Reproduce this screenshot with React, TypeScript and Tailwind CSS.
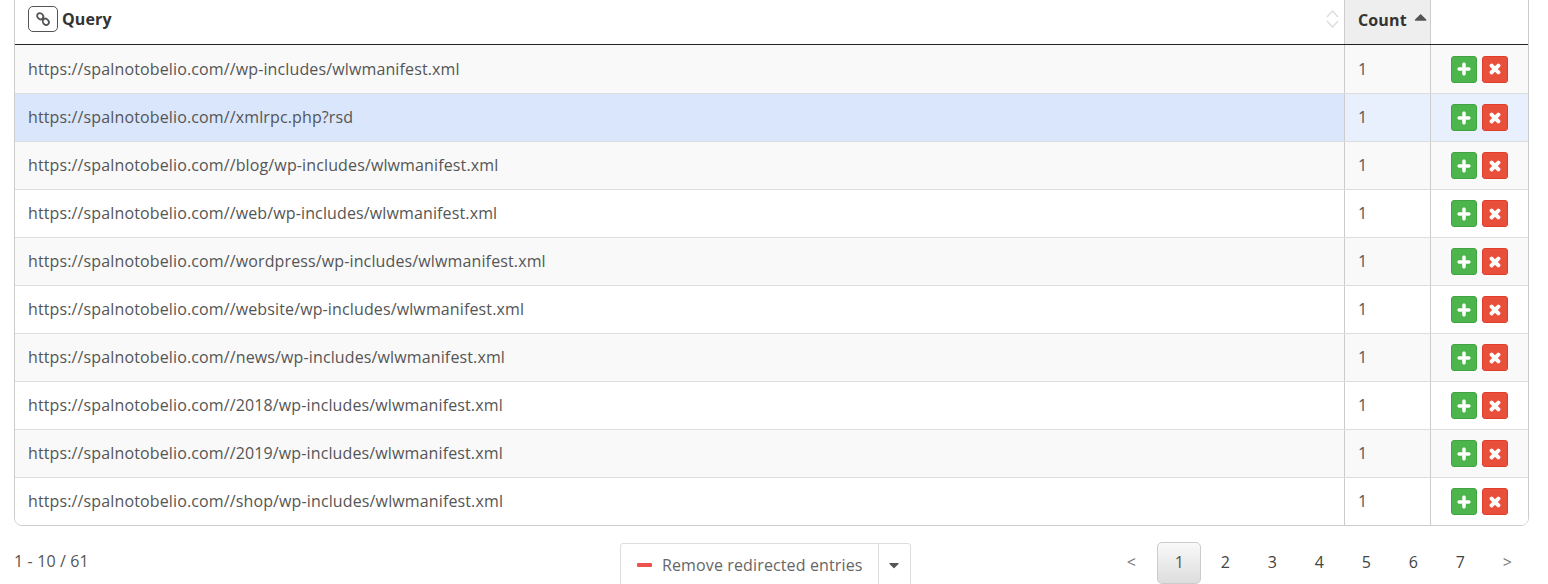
import { FaPlus, FaTimes, FaCaretDown, FaCaretUp } from 'react-icons/fa';

const queries = [
  'https://spalnotobelio.com//wp-includes/wlwmanifest.xml',
  'https://spalnotobelio.com//xmlrpc.php?rsd',
  'https://spalnotobelio.com//blog/wp-includes/wlwmanifest.xml',
  'https://spalnotobelio.com//web/wp-includes/wlwmanifest.xml',
  'https://spalnotobelio.com//wordpress/wp-includes/wlwmanifest.xml',
  'https://spalnotobelio.com//website/wp-includes/wlwmanifest.xml',
  'https://spalnotobelio.com//news/wp-includes/wlwmanifest.xml',
  'https://spalnotobelio.com//2018/wp-includes/wlwmanifest.xml',
  'https://spalnotobelio.com//2019/wp-includes/wlwmanifest.xml',
  'https://spalnotobelio.com//shop/wp-includes/wlwmanifest.xml',
];

function rowBg(i: number) {
  if (i === 1) return 'bg-[#d9e6fc]';
  return i % 2 === 0 ? 'bg-[#f9f9f9]' : 'bg-white';
}

function countBg(i: number) {
  if (i === 1) return 'bg-[#e9f0fd]';
  return i % 2 === 0 ? 'bg-[#f9f9f9]' : 'bg-white';
}

function ChainIcon() {
  return (
    <svg width="16" height="16" viewBox="0 0 16 16" fill="none" stroke="#555" strokeWidth="1.8">
      <ellipse cx="5.2" cy="5.2" rx="3.3" ry="2.8" transform="rotate(45 5.2 5.2)" />
      <ellipse cx="10.8" cy="10.8" rx="3.3" ry="2.8" transform="rotate(45 10.8 10.8)" />
      <path d="M7 7l2 2" />
    </svg>
  );
}

export default function App() {
  return (
    <div className="w-[1548px] h-[584px] overflow-hidden bg-white font-['Open_Sans',sans-serif] text-[16px] tracking-[0.13px] text-[#555]">
      <div className="ml-[14px] w-[1515px] h-[527px] -mt-px border border-[#ccc] rounded-b-[8px] overflow-hidden">
        {/* header */}
        <div className="flex h-[45px] border-b border-[#222] bg-white">
          <div className="flex-1 flex items-center pl-[13px] pr-[5px] pb-[6px]">
            <span className="w-[30px] h-[26px] border border-[#555] rounded-[5px] flex items-center justify-center">
              <ChainIcon />
            </span>
            <span className="ml-[4px] font-bold text-[#333]">Query</span>
            <span className="ml-auto flex flex-col gap-[2px]">
              <svg width="13" height="8" viewBox="0 0 13 8" fill="none" stroke="#ddd" strokeWidth="1.4"><path d="M1 7l5.5-6 5.5 6" /></svg>
              <svg width="13" height="8" viewBox="0 0 13 8" fill="none" stroke="#ddd" strokeWidth="1.4"><path d="M1 1l5.5 6 5.5-6" /></svg>
            </span>
          </div>
          <div className="w-[86px] border-l border-[#ccc] bg-[#eee] flex items-center pl-[13px] pb-[5px] font-bold text-[#333]">
            Count
            <FaCaretUp className="ml-[4px] mb-[5px] text-[#555] text-[20px]" />
          </div>
          <div className="w-[98px] border-l border-[#ccc]" />
        </div>

        {/* rows */}
        {queries.map((q, i) => (
          <div key={q} className={`flex h-[48px] ${i > 0 ? 'border-t border-[#ddd]' : ''} ${rowBg(i)}`}>
            <div className={`flex-1 flex items-center pl-[13px] whitespace-nowrap ${i > 0 ? 'pb-px' : ''}`}>{q}</div>
            <div className={`w-[86px] border-l border-[#ccc] flex items-center pl-[13px] ${i > 0 ? 'pb-px' : ''} ${countBg(i)}`}>1</div>
            <div className={`w-[98px] border-l border-[#ccc] flex items-center pl-[20px] gap-[5px] ${countBg(i)}`}>
              <button className="w-[26px] h-[27px] rounded-[3px] bg-[#4cb64c] border border-[#43a243] flex items-center justify-center text-white text-[14px]">
                <FaPlus stroke="currentColor" strokeWidth={30} />
              </button>
              <button className="w-[26px] h-[27px] rounded-[3px] bg-[#e8503c] border border-[#e03e2a] flex items-center justify-center text-white text-[14px]">
                <FaTimes stroke="currentColor" strokeWidth={50} />
              </button>
            </div>
          </div>
        ))}
      </div>

      {/* footer */}
      <div className="relative flex items-start mt-[17px] pl-[14px] pr-[17px] h-[60px]">
        <div className="w-[400px] pt-[6px] text-[#555]">1 - 10 / 61</div>
        <div className="ml-[206px] flex h-[44px] border border-[#ddd] rounded-[3px]">
          <div className="flex items-center pl-[16px] w-[257px] text-[#666]">
            <span className="w-[15px] h-[4px] bg-[#ef5350] rounded-[1px]" />
            <span className="ml-[10px]">Remove redirected entries</span>
          </div>
          <div className="w-[32px] border-l border-[#ddd] pr-px flex items-center justify-center text-[#555] text-[16px]">
            <FaCaretDown />
          </div>
        </div>
        <div className="ml-auto -mt-px flex items-center h-[42px] text-[#444]">
          {['<', '1', '2', '3', '4', '5', '6', '7', '>'].map((p, i) => (
            <span
              key={p}
              className={
                p === '1'
                  ? 'w-[44px] h-[42px] mx-[1.5px] pb-[2px] pl-[2px] flex items-center justify-center border border-[#ccc] rounded-[5px] bg-gradient-to-b from-[#f9f9f9] to-[#ddd] text-[#555]'
                  : `w-[47px] pb-[2px] flex items-center justify-center ${i === 0 || i === 8 ? 'text-[#777]' : ''}`
              }
            >
              {p}
            </span>
          ))}
        </div>
      </div>
    </div>
  );
}
